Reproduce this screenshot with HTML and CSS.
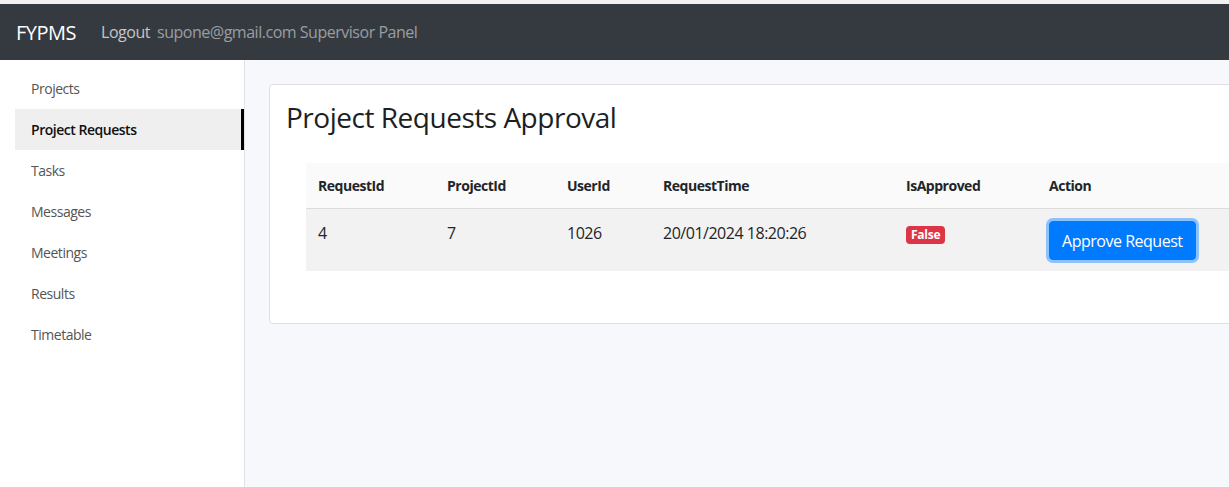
FILE: index.html
```html
<!DOCTYPE html>
<html lang="en">
<head>
<meta charset="utf-8">
<title>FYPMS - Project Requests Approval</title>
<link rel="stylesheet" href="styles.css">
</head>
<body>
<div class="top-strip"></div>
<nav class="navbar">
  <span class="brand">FYPMS</span>
  <a class="nav-link" href="#">Logout</a>
  <span class="nav-text">supone@gmail.com Supervisor Panel</span>
</nav>
<div class="layout">
  <aside class="sidebar">
    <ul class="side-menu">
      <li><a class="side-link" href="#">Projects</a></li>
      <li><a class="side-link active" href="#">Project Requests</a></li>
      <li><a class="side-link" href="#">Tasks</a></li>
      <li><a class="side-link" href="#">Messages</a></li>
      <li><a class="side-link" href="#">Meetings</a></li>
      <li><a class="side-link" href="#">Results</a></li>
      <li><a class="side-link" href="#">Timetable</a></li>
    </ul>
  </aside>
  <main class="main">
    <div class="card">
      <h2 class="card-title">Project Requests Approval</h2>
      <div class="table-wrap">
        <table class="req-table">
          <colgroup>
            <col class="c1"><col class="c2"><col class="c3"><col class="c4"><col class="c5"><col class="c6">
          </colgroup>
          <thead>
            <tr>
              <th>RequestId</th>
              <th>ProjectId</th>
              <th>UserId</th>
              <th>RequestTime</th>
              <th>IsApproved</th>
              <th>Action</th>
            </tr>
          </thead>
          <tbody>
            <tr>
              <td>4</td>
              <td>7</td>
              <td>1026</td>
              <td>20/01/2024 18:20:26</td>
              <td><span class="badge">False</span></td>
              <td><button class="btn-approve" type="button">Approve Request</button></td>
            </tr>
          </tbody>
        </table>
      </div>
    </div>
  </main>
</div>
</body>
</html>
```

FILE: styles.css
```css
* { box-sizing: border-box; }

html, body {
  margin: 0;
  padding: 0;
  height: 100%;
  overflow: hidden;
}

body {
  font-family: "Open Sans", "Noto Sans", sans-serif;
  letter-spacing: -0.03em;
  color: #212529;
  background: #f7f8fc;
}

.top-strip {
  height: 4px;
  background: #f1f1f1;
}

.navbar {
  height: 56px;
  background: #343a40;
  display: flex;
  align-items: center;
  padding: 0 16px;
}

.brand {
  color: #fff;
  font-size: 20px;
  margin-right: 25px;
}

.nav-link {
  color: rgba(255, 255, 255, 0.72);
  font-size: 16px;
  text-decoration: none;
  margin-right: 7px;
}

.nav-text {
  color: rgba(255, 255, 255, 0.5);
  font-size: 16px;
}

.layout {
  display: flex;
  height: calc(100% - 60px);
}

.sidebar {
  width: 245px;
  flex: 0 0 245px;
  background: #fff;
  border-right: 1px solid #dee2e6;
  padding: 8px 0 0 15px;
}

.side-menu {
  list-style: none;
  margin: 0;
  padding: 0;
}

.side-link {
  display: block;
  height: 41px;
  line-height: 41px;
  padding-left: 16px;
  font-size: 14px;
  color: #555;
  text-decoration: none;
}

.side-link.active {
  background: #efefef;
  color: #111;
  font-weight: 600;
  border-right: 3px solid #000;
}

.main {
  flex: 1;
  padding: 24px 0 0 24px;
  overflow: hidden;
}

.card {
  width: 1040px;
  background: #fff;
  border: 1px solid #dfdfdf;
  border-radius: 4px;
  padding: 16px 17px 52px 16px;
}

.card-title {
  margin: 0 0 28px;
  font-size: 28px;
  font-weight: 400;
  line-height: 1.2;
  color: #1c1f23;
}

.table-wrap {
  padding-left: 20px;
}

.req-table {
  width: 990px;
  border-collapse: collapse;
  table-layout: fixed;
}

.c1 { width: 129px; }
.c2 { width: 120px; }
.c3 { width: 96px; }
.c4 { width: 243px; }
.c5 { width: 143px; }

.req-table th {
  text-align: left;
  font-size: 14px;
  font-weight: 700;
  line-height: 21px;
  padding: 12px;
  background: #fafafa;
  border-bottom: 1px solid #dcdcdc;
  color: #212529;
}

.req-table td {
  vertical-align: top;
  font-size: 16px;
  line-height: 24px;
  padding: 12px 12px 11px;
  background: #f2f2f2;
}

.badge {
  display: inline-block;
  font-size: 12px;
  font-weight: 700;
  line-height: 1;
  padding: 3px 5px;
  color: #fff;
  background: #dc3545;
  border-radius: 4px;
  letter-spacing: -0.02em;
}

.btn-approve {
  font-family: inherit;
  letter-spacing: inherit;
  font-size: 16px;
  line-height: 24px;
  padding: 7px 12px 6px;
  color: #fff;
  background: #007bff;
  border: 1px solid #007bff;
  border-radius: 4px;
  box-shadow: 0 0 0 3px rgba(38, 143, 255, 0.5);
  cursor: pointer;
}
```
